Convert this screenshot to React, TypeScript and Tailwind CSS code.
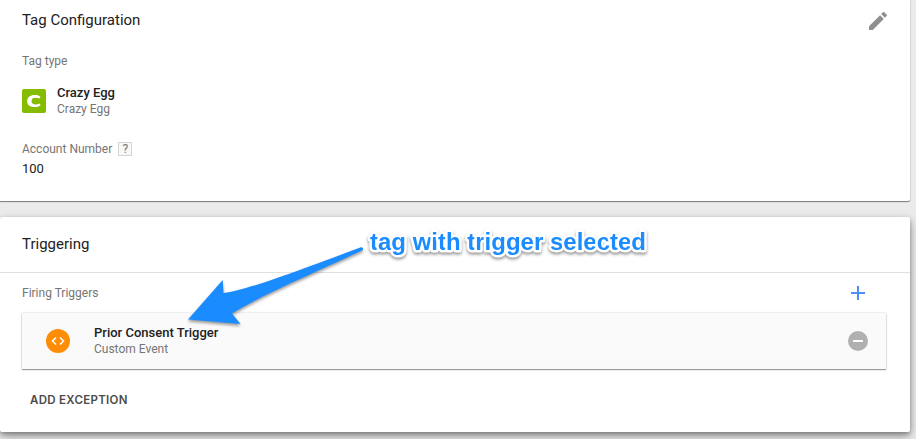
import React from 'react';

function PencilIcon() {
  return (
    <svg className="mt-[2px] block size-6" viewBox="0 0 24 24" fill="#8f8f8f">
      <path d="M3 17.25V21h3.75L17.81 9.94l-3.75-3.75L3 17.25zM20.71 7.04a1 1 0 0 0 0-1.41l-2.34-2.34a1 1 0 0 0-1.41 0l-1.83 1.83 3.75 3.75 1.83-1.83z" />
    </svg>
  );
}

function CrazyEggLogo() {
  return (
    <svg className="block size-6" viewBox="0 0 24 24">
      <rect width="24" height="24" rx="2" fill="#86bc00" />
      <path
        d="M18.5 7.7C16.8 6.4 14.8 6 12.6 6C8 6 5.1 8.5 5.1 12.2C5.1 15.9 8 18.1 12.6 18.1C14.9 18.1 17 17.7 18.7 16.3L17.5 14.5C16.2 15.2 15 15.5 13.6 15.5C11 15.5 9.5 14.2 9.5 12.1C9.5 9.9 11 8.7 13.5 8.7C14.9 8.7 16.1 8.9 17.4 9.6Z"
        fill="#fff"
      />
    </svg>
  );
}

function CustomEventIcon() {
  return (
    <svg className="block size-6" viewBox="0 0 24 24">
      <circle cx="12" cy="12" r="12" fill="#ff8c05" />
      <path d="M10 8.5 6.5 12l3.5 3.5M14 8.5l3.5 3.5-3.5 3.5" fill="none" stroke="#fff" strokeWidth="1.6" />
    </svg>
  );
}

function Annotation() {
  return (
    <svg
      className="pointer-events-none absolute top-0 left-0 h-[439px] w-[916px] [font-family:'Liberation_Sans',Arial,sans-serif]"
      viewBox="0 0 916 439"
    >
      <path
        className="[filter:drop-shadow(0px_2px_1.5px_rgba(0,0,0,0.4))]"
        d="M188 319.5 L222.7 280 L223.5 293 C247 290 295 272 361 247.2 A1.8 1.8 0 0 1 362.6 250.2 C300 279 256 298 232 313.5 L240.5 324 Z"
        fill="#1a8cff"
      />
      <text
        className="[filter:drop-shadow(0px_2px_1.5px_rgba(0,0,0,0.4))]"
        x="370"
        y="250"
        fontSize="24"
        fontWeight="700"
        textLength="276"
        fill="#1a8cff"
        stroke="#fff"
        strokeWidth="5"
        strokeLinejoin="round"
        paintOrder="stroke"
      >
        tag with trigger selected
      </text>
    </svg>
  );
}

export default function App() {
  return (
    <div className="relative h-[439px] w-[916px] overflow-hidden bg-[#ebebeb] text-[12px] leading-4 text-[#212121] [font-family:Roboto,sans-serif]">
      <section className="h-[201px] w-[910px] rounded-br-[2px] bg-white pl-[22px] shadow-[0_1px_1px_rgba(0,0,0,0.45),0_0_2px_rgba(0,0,0,0.2)]">
        <header className="flex h-10 items-center justify-between pr-5">
          <h2 className="text-[15px] leading-5">Tag Configuration</h2>
          <PencilIcon />
        </header>
        <p className="mt-[13px] text-[#757575]">Tag type</p>
        <div className="mt-4 flex h-8 items-center gap-[11px]">
          <CrazyEggLogo />
          <div>
            <p className="text-[13px] leading-4 font-medium">Crazy Egg</p>
            <p className="text-[#757575]">Crazy Egg</p>
          </div>
        </div>
        <div className="mt-6 flex h-4 items-center gap-[6px] text-[#757575]">
          <span>Account Number</span>
          <span className="flex size-[14px] items-center justify-center border border-[#d5d5d5] bg-[#f8f8f8] text-[12px] leading-3">?</span>
        </div>
        <p className="mt-1 text-[13px] leading-4">100</p>
      </section>

      <section className="mt-4 h-[215px] w-[910px] rounded-[2px] bg-white shadow-[0_2px_4px_rgba(0,0,0,0.3),0_5px_12px_rgba(0,0,0,0.3)]">
        <header className="flex h-14 items-center border-b border-[#e0e0e0] pb-px pl-[22px]">
          <h2 className="text-[15px] leading-5">Triggering</h2>
        </header>
        <div className="flex h-10 items-center justify-between pr-[45px] pl-[22px] text-[#757575]">
          <span>Firing Triggers</span>
          <svg className="block size-[14px]" viewBox="0 0 14 14" fill="#4f8ef7">
            <path d="M6 0h2v6h6v2H8v6H6V8H0V6h6z" />
          </svg>
        </div>
        <div className="mr-6 ml-[22px] flex h-14 items-center bg-[#fafafa] pr-[18px] pl-6 shadow-[0_1px_1px_rgba(0,0,0,0.35),0_0_2px_rgba(0,0,0,0.2)]">
          <CustomEventIcon />
          <div className="ml-6 flex-1">
            <p className="text-[13px] leading-4 font-medium">Prior Consent Trigger</p>
            <p className="text-[#757575]">Custom Event</p>
          </div>
          <svg className="block size-5" viewBox="0 0 20 20">
            <circle cx="10" cy="10" r="10" fill="#b0b0b0" />
            <path d="M5 9h10v2H5z" fill="#fff" />
          </svg>
        </div>
        <button className="mt-[23px] ml-[30px] block text-[11.5px] leading-4 font-semibold tracking-[0.3px] text-[#4a4a4a] [font-family:Inter,sans-serif]">ADD EXCEPTION</button>
      </section>

      <Annotation />
    </div>
  );
}
